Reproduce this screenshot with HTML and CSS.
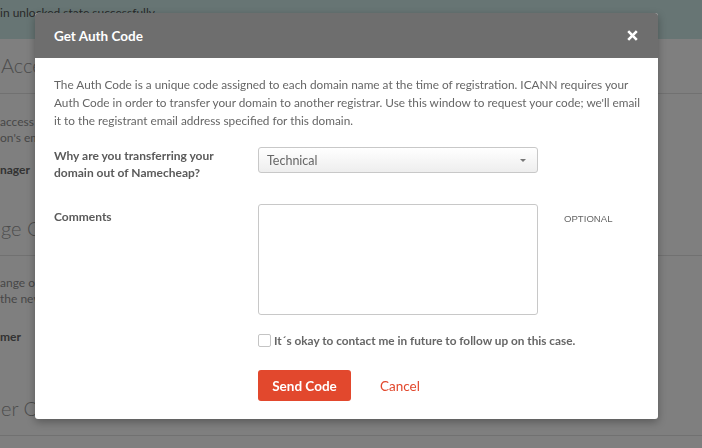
FILE: index.html
```html
<!DOCTYPE html>
<html lang="en">
<head>
<meta charset="utf-8">
<title>Get Auth Code</title>
<link rel="stylesheet" href="styles.css">
</head>
<body>
<div class="page">
  <div class="notice">in unlocked state successfully</div>
  <section class="sec">
    <h2 class="sec-title">Access</h2>
  </section>
  <section class="sec sec-body">
    <p class="bg-text">access is</p>
    <p class="bg-text">on's email</p>
    <p class="bg-strong">nager</p>
    <h2 class="sec-title sec-title-2">ge Ov</h2>
  </section>
  <section class="sec sec-body sec-body-3">
    <p class="bg-text">ange of</p>
    <p class="bg-text">the new</p>
    <p class="bg-strong bg-strong-2">mer</p>
    <h2 class="sec-title sec-title-3">er Out</h2>
  </section>
</div>
<div class="overlay"></div>
<div class="modal">
  <div class="modal-head">
    <span class="modal-title">Get Auth Code</span>
    <svg class="modal-close" width="11" height="11" viewBox="0 0 11 11" aria-label="Close">
      <path d="M1.2 1.2 L9.8 9.8 M9.8 1.2 L1.2 9.8" stroke="#fff" stroke-width="2.6" fill="none"/>
    </svg>
  </div>
  <div class="modal-body">
    <p class="intro">The Auth Code is a unique code assigned to each domain name at the time of registration. ICANN requires your Auth Code in order to transfer your domain to another registrar. Use this window to request your code; we'll email it to the registrant email address specified for this domain.</p>
    <div class="form">
      <div class="label label-1">Why are you transferring your domain out of Namecheap?</div>
      <div class="select">
        <span>Technical</span>
        <span class="caret"></span>
      </div>
      <div></div>
      <div class="label label-2">Comments</div>
      <div class="textarea"></div>
      <div class="optional">OPTIONAL</div>
      <div></div>
      <label class="check">
        <span class="box"></span>
        <span>It´s okay to contact me in future to follow up on this case.</span>
      </label>
      <div></div>
      <div class="actions">
        <span class="btn">Send Code</span>
        <span class="cancel">Cancel</span>
      </div>
    </div>
  </div>
</div>
</body>
</html>
```

FILE: styles.css
```css
html, body {
  margin: 0;
  padding: 0;
  width: 702px;
  height: 448px;
  overflow: hidden;
  background: #fff;
  font-family: Lato, "Open Sans", sans-serif;
}
.page {
  width: 702px;
}
.notice {
  height: 39px;
  background: #cfebe9;
  color: #555;
  font-size: 12px;
  line-height: 26px;
  white-space: nowrap;
}
.sec {
  border-bottom: 1px solid #e2e2e2;
}
.sec-title {
  margin: 0;
  font-weight: 300;
  font-size: 20px;
  color: #999;
  height: 54px;
  line-height: 52px;
  padding-left: 1px;
  white-space: nowrap;
}
.sec-body { padding-top: 20px; }
.sec-body-3 { padding-top: 19px; }
.bg-text {
  margin: 0;
  font-size: 12px;
  line-height: 16px;
  color: #8f8f8f;
}
.bg-strong {
  margin: 16px 0 0;
  font-size: 12px;
  font-weight: 700;
  color: #666;
  line-height: 16px;
}
.sec-title-2 { margin-top: 24px; height: 53px; }
.bg-strong-2 { margin-top: 22px; }
.sec-title-3 { margin-top: 37px; height: 53px; }
.overlay {
  position: fixed;
  inset: 0;
  background: rgba(0, 0, 0, 0.5);
}
.modal {
  position: absolute;
  left: 35px;
  top: 13px;
  width: 623px;
  height: 406px;
  background: #fff;
  border-radius: 3px;
  box-shadow: 0 3px 8px rgba(0, 0, 0, 0.3);
  overflow: hidden;
}
.modal-head {
  height: 45px;
  background: #6e6e6e;
  display: flex;
  align-items: center;
  justify-content: space-between;
  padding: 0 20px 0 19px;
}
.modal-title {
  color: #fff;
  font-weight: 700;
  font-size: 13.5px;
}
.modal-close {
  display: block;
}
.modal-body {
  padding: 18px 15px 18px 19px;
}
.intro {
  margin: 0;
  font-size: 11.8px;
  line-height: 18px;
  color: #666;
}
.form {
  margin-top: 17px;
  display: grid;
  grid-template-columns: 204px 280px auto;
  color: #555;
}
.label {
  font-size: 12px;
  font-weight: 700;
  line-height: 17px;
  color: #5a5a5a;
}
.label-1 { max-width: 165px; }
.label-2 { padding-top: 4px; margin-top: 23px; }
.select {
  height: 26px;
  box-sizing: border-box;
  border: 1px solid #c8c8c8;
  border-radius: 3px;
  background: linear-gradient(#ffffff, #eeeeee);
  display: flex;
  align-items: center;
  justify-content: space-between;
  padding: 0 11px 0 8px;
  font-size: 12.5px;
  color: #666;
}
.caret {
  width: 0;
  height: 0;
  border-left: 3px solid transparent;
  border-right: 3px solid transparent;
  border-top: 3px solid #777;
}
.textarea {
  margin-top: 23px;
  height: 111px;
  box-sizing: border-box;
  border: 1px solid #c8c8c8;
  border-radius: 3px;
}
.optional {
  margin-top: 23px;
  padding-top: 9px;
  padding-left: 26px;
  font-size: 9.6px;
  color: #666;
  font-family: "Liberation Sans", Arial, sans-serif;
}
.check {
  grid-column: 2 / 4;
  margin-top: 18px;
  display: flex;
  align-items: center;
  gap: 3px;
  font-size: 11.8px;
  font-weight: 700;
  color: #666;
  white-space: nowrap;
}
.box {
  width: 13px;
  height: 13px;
  box-sizing: border-box;
  border: 1px solid #c4c4c4;
  border-radius: 2px;
  flex: none;
}
.actions {
  grid-column: 2;
  margin-top: 22px;
  display: flex;
  align-items: center;
  gap: 29px;
}
.btn {
  width: 93px;
  height: 31px;
  box-sizing: border-box;
  background: #e2482d;
  border-radius: 3px;
  color: #fff;
  font-weight: 700;
  font-size: 13.5px;
  display: flex;
  align-items: center;
  justify-content: center;
}
.cancel {
  color: #e2482d;
  font-size: 13.5px;
}
```
